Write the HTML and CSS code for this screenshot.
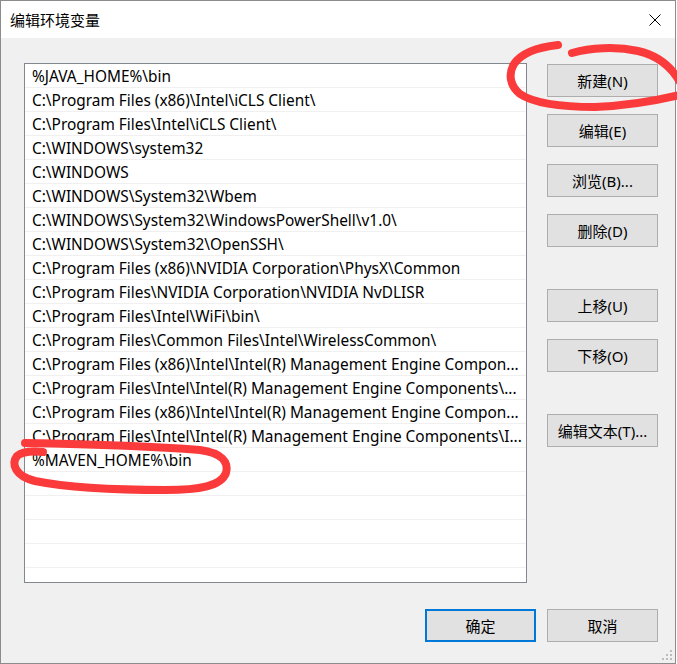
FILE: index.html
```html
<!DOCTYPE html>
<html lang="zh-CN">

<head>
    <meta charset="UTF-8">
    <meta name="viewport" content="width=device-width, initial-scale=1.0">
    <title>编辑环境变量</title>
    <link rel="stylesheet" href="styles.css">
</head>

<body>
    <div class="janela">
        <div class="barra-titulo">
            <span class="titulo">编辑环境变量</span>
            <svg class="fechar" width="12" height="12" viewBox="0 0 12 12">
                <path d="M0.5 0.5 L11.5 11.5 M11.5 0.5 L0.5 11.5" stroke="#000" stroke-width="1" fill="none" />
            </svg>
        </div>

        <div class="conteudo">
            <div class="principal">
                <div class="lista">
                    <div class="linha">%JAVA_HOME%\bin</div>
                    <div class="linha">C:\Program Files (x86)\Intel\iCLS Client\</div>
                    <div class="linha">C:\Program Files\Intel\iCLS Client\</div>
                    <div class="linha">C:\WINDOWS\system32</div>
                    <div class="linha">C:\WINDOWS</div>
                    <div class="linha">C:\WINDOWS\System32\Wbem</div>
                    <div class="linha">C:\WINDOWS\System32\WindowsPowerShell\v1.0\</div>
                    <div class="linha">C:\WINDOWS\System32\OpenSSH\</div>
                    <div class="linha">C:\Program Files (x86)\NVIDIA Corporation\PhysX\Common</div>
                    <div class="linha">C:\Program Files\NVIDIA Corporation\NVIDIA NvDLISR</div>
                    <div class="linha">C:\Program Files\Intel\WiFi\bin\</div>
                    <div class="linha">C:\Program Files\Common Files\Intel\WirelessCommon\</div>
                    <div class="linha">C:\Program Files (x86)\Intel\Intel(R) Management Engine Compon...</div>
                    <div class="linha">C:\Program Files\Intel\Intel(R) Management Engine Components\...</div>
                    <div class="linha">C:\Program Files (x86)\Intel\Intel(R) Management Engine Compon...</div>
                    <div class="linha">C:\Program Files\Intel\Intel(R) Management Engine Components\I...</div>
                    <div class="linha">%MAVEN_HOME%\bin</div>
                    <div class="linha"></div>
                    <div class="linha"></div>
                    <div class="linha"></div>
                    <div class="linha"></div>
                    <div class="linha"></div>
                </div>

                <div class="acoes">
                    <button class="botao">新建(N)</button>
                    <button class="botao">编辑(E)</button>
                    <button class="botao">浏览(B)...</button>
                    <button class="botao">删除(D)</button>
                    <button class="botao separado">上移(U)</button>
                    <button class="botao">下移(O)</button>
                    <button class="botao separado">编辑文本(T)...</button>
                </div>
            </div>

            <div class="rodape">
                <button class="botao padrao">确定</button>
                <button class="botao">取消</button>
            </div>
        </div>

        <!-- alça de redimensionar -->
        <svg class="alca" width="12" height="12" viewBox="0 0 12 12">
            <g fill="#bcbcbc">
                <rect x="9" y="1" width="2" height="2" />
                <rect x="5" y="5" width="2" height="2" />
                <rect x="9" y="5" width="2" height="2" />
                <rect x="1" y="9" width="2" height="2" />
                <rect x="5" y="9" width="2" height="2" />
                <rect x="9" y="9" width="2" height="2" />
            </g>
        </svg>

        <!-- marcações em vermelho por cima do print -->
        <svg class="marcas" width="677" height="664" viewBox="0 0 677 664">
            <g fill="none" stroke="#fb3b3b" stroke-width="8" stroke-linecap="round" stroke-linejoin="round">
                <path d="M558 45 C540 47 522 52 514 64 C508 74 510 86 520 94 C535 104 565 107 595 107 C625 106 655 101 680 95" />
                <path d="M572 53 C590 48 615 46 638 51 C660 56 672 68 680 82" />
                <path d="M25 443 C80 444 150 446 200 450 C222 453 229 462 226 473 C221 486 200 490 165 490 C120 490 70 488 35 481 C15 476 11 464 17 456 C23 451 33 451 43 452" />
            </g>
        </svg>
    </div>
</body>

</html>
```

FILE: styles.css
```css
* {
    box-sizing: border-box;
}

body {
    margin: 0;
    background-color: #ffffff;
    font-family: "Noto Sans", "Noto Sans CJK SC", sans-serif;
    font-size: 15px;
    color: #000000;
}

.janela {
    position: relative;
    width: 676px;
    height: 664px;
    border: 1px solid #8c8c8c;
    background-color: #f0f0f0;
    display: flex;
    flex-direction: column;
}

.barra-titulo {
    height: 37px;
    background-color: #ffffff;
    display: flex;
    align-items: center;
    justify-content: space-between;
    padding-left: 9px;
    padding-right: 14px;
}

.titulo {
    font-size: 15px;
}

.conteudo {
    flex: 1;
    display: flex;
    flex-direction: column;
    padding: 25px 17px 0 23px;
}

.principal {
    display: flex;
    gap: 20px;
}

.lista {
    width: 504px;
    height: 520px;
    border: 1px solid #828790;
    background-color: #ffffff;
    overflow: hidden;
}

.linha {
    height: 24px;
    padding-top: 3px;
    line-height: 20px;
    padding-left: 7px;
    padding-right: 2px;
    font-size: 15.4px;
    border-bottom: 1px solid #f0f0f0;
    white-space: nowrap;
    overflow: hidden;
}

.acoes {
    display: flex;
    flex-direction: column;
    gap: 17px;
    padding-top: 1px;
}

.botao {
    width: 111px;
    height: 33px;
    padding: 0;
    font-family: "Noto Sans", "Noto Sans CJK SC", sans-serif;
    font-size: 15px;
    color: #000000;
    background-color: #e1e1e1;
    border: 1px solid #adadad;
    border-radius: 0;
}

.separado {
    margin-top: 25px;
}

.rodape {
    display: flex;
    justify-content: flex-end;
    gap: 11px;
    margin-top: 26px;
}

.padrao {
    border: 2px solid #0078d7;
}

.alca {
    position: absolute;
    right: 2px;
    bottom: 2px;
}

.marcas {
    position: absolute;
    left: -1px;
    top: -1px;
    pointer-events: none;
}
```
